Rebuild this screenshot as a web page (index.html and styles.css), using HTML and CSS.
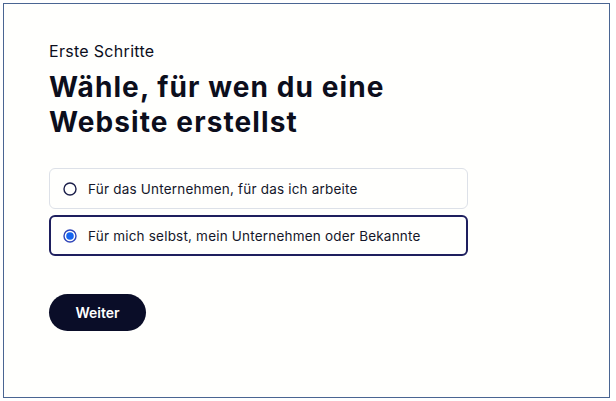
FILE: index.html
```html
<!DOCTYPE html>
<html lang="de">
<head>
<meta charset="utf-8">
<link rel="stylesheet" href="styles.css">
</head>
<body>
<div class="frame">
  <p class="eyebrow">Erste Schritte</p>
  <h1 class="title">Wähle, für wen du eine<br>Website erstellst</h1>
  <div class="options">
    <label class="option">
      <svg class="radio" width="14" height="14" viewBox="0 0 14 14"><circle cx="7" cy="7" r="6" fill="none" stroke="#1c1f4a" stroke-width="1.4"/></svg>
      <span>Für das Unternehmen, für das ich arbeite</span>
    </label>
    <label class="option selected">
      <svg class="radio" width="14" height="14" viewBox="0 0 14 14"><circle cx="7" cy="7" r="6" fill="none" stroke="#2f45b8" stroke-width="1.4"/><circle cx="7" cy="7" r="3.8" fill="#1665f0"/></svg>
      <span>Für mich selbst, mein Unternehmen oder Bekannte</span>
    </label>
  </div>
  <button class="next">Weiter</button>
</div>
</body>
</html>
```
FILE: styles.css
```css
html, body {
  margin: 0;
  padding: 0;
  background: #ffffff;
}
body {
  font-family: Inter, "Noto Sans", sans-serif;
  color: #0c0e1c;
}
.frame {
  margin: 3px 0 0 3px;
  width: 607px;
  height: 395px;
  border: 1px solid #4a6592;
  background: #fffffd;
  padding: 0 0 0 45px;
  box-sizing: border-box;
  display: flex;
  flex-direction: column;
  align-items: flex-start;
}
.eyebrow {
  margin: 37px 0 0 0;
  font-size: 16px;
  line-height: 20px;
  font-weight: 400;
  letter-spacing: 0.3px;
}
.title {
  margin: 9px 0 0 0;
  font-size: 28px;
  line-height: 35px;
  font-weight: 700;
  letter-spacing: 1.1px;
}
.option {
  display: flex;
  align-items: center;
  gap: 11px;
  height: 41px;
  box-sizing: border-box;
  padding: 0 13px;
  border: 1px solid #dde1e8;
  border-radius: 6px;
  font-size: 13.5px;
  letter-spacing: 0.2px;
  color: #14162a;
}
.options {
  margin-top: 28px;
  display: flex;
  flex-direction: column;
  gap: 6px;
  width: 419px;
}
.option.selected {
  border: 2px solid #1e1f5e;
  padding-left: 12px;
}
.radio {
  flex: none;
}
.next {
  margin-top: 38px;
  width: 97px;
  height: 37px;
  border: none;
  border-radius: 19px;
  background: #0a0d28;
  color: #ffffff;
  font-family: Inter, "Noto Sans", sans-serif;
  font-size: 14px;
  font-weight: 600;
}
```
